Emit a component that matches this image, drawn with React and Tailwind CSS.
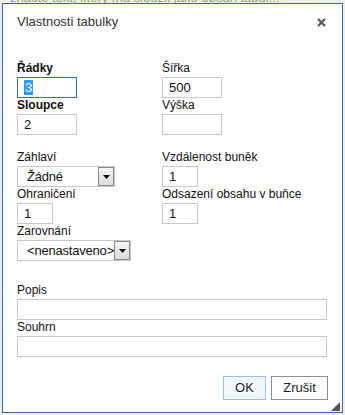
import React from "react";

const font = { fontFamily: '"Liberation Sans", Arial, sans-serif' };

function Label({ children, bold }) {
  return (
    <div
      className={
        "text-[12px] leading-[14px] mb-[2px] text-[#111] whitespace-nowrap " +
        (bold ? "font-bold" : "")
      }
    >
      {children}
    </div>
  );
}

function TextBox({ value, width, focused }) {
  return (
    <div
      className={
        "h-[21px] border bg-white flex items-center pl-[6px] text-[13px] text-[#111] " +
        (focused ? "border-[#3a6cc4]" : "border-[#c6c9cc]")
      }
      style={{ width }}
    >
      {focused ? (
        <span className="bg-[#3399ff] text-white leading-[15px] px-px">{value}</span>
      ) : (
        value
      )}
    </div>
  );
}

function Select({ value, width }) {
  return (
    <div
      className="h-[21px] border border-[#c6c9cc] bg-white flex items-center text-[13px] text-[#111]"
      style={{ width }}
    >
      <span className="flex-1 min-w-0 pl-[9px] whitespace-nowrap tracking-[-0.2px]">{value}</span>
      <div className="shrink-0 w-[16px] h-[19px] border border-[#8a8a8a] bg-gradient-to-b from-[#f4f4f4] to-[#dcdcdc] flex items-center justify-center">
        <svg width="7" height="4" viewBox="0 0 7 4">
          <path d="M0 0h7L3.5 4z" fill="#111" />
        </svg>
      </div>
    </div>
  );
}

export default function App() {
  return (
    <div className="w-[345px] h-[415px] bg-[#efefef] overflow-hidden" style={font}>
      <div className="h-[3px] overflow-hidden">
        <div className="text-[13px] leading-[13px] text-[#999] whitespace-nowrap pl-[10px] -mt-[9px]">
          značte text, který má sloužit jako obsah tabul...
        </div>
      </div>
      <div className="ml-[2px] w-[341px] h-[410px] border border-[#3d63a8] bg-white flex flex-col pl-[14px] pr-[14px]">
        <div className="flex items-center justify-between pt-[9px] h-[27px]">
          <span className="text-[13px] leading-[18px] text-[#333]">Vlastnosti tabulky</span>
          <svg width="9" height="9" viewBox="0 0 9 9" className="mr-[2px]">
            <path d="M1 1l7 7M8 1L1 8" stroke="#555" strokeWidth="2.2" />
          </svg>
        </div>

        <div className="grid grid-cols-[145px_1fr] mt-[30px]">
          <div>
            <Label bold>Řádky</Label>
            <TextBox value="3" width={60} focused />
            <Label bold>Sloupce</Label>
            <TextBox value="2" width={60} />
          </div>
          <div>
            <Label>Šířka</Label>
            <TextBox value="500" width={60} />
            <Label>Výška</Label>
            <TextBox value="" width={60} />
          </div>
        </div>

        <div className="grid grid-cols-[145px_1fr] mt-[15px]">
          <div>
            <Label>Záhlaví</Label>
            <Select value="Žádné" width={98} />
            <Label>Ohraničení</Label>
            <TextBox value="1" width={36} />
            <Label>Zarovnání</Label>
            <Select value="<nenastaveno>" width={114} />
          </div>
          <div>
            <Label>Vzdálenost buněk</Label>
            <TextBox value="1" width={36} />
            <Label>Odsazení obsahu v buňce</Label>
            <TextBox value="1" width={36} />
          </div>
        </div>

        <div className="mt-[22px]">
          <Label>Popis</Label>
          <TextBox value="" width={310} />
          <Label>Souhrn</Label>
          <TextBox value="" width={310} />
        </div>

        <div className="flex justify-end gap-[5px] mt-[19px]">
          <button className="w-[43px] h-[24px] border border-[#9dbdeb] bg-[#f2f6fd] text-[13px] text-[#222]">
            OK
          </button>
          <button className="w-[57px] h-[24px] border border-[#8f8f8f] bg-white text-[13px] text-[#222]">
            Zrušit
          </button>
        </div>

        <div className="flex-1 flex items-end justify-end -mr-[12px] pb-[1px]">
          <svg width="9" height="9" viewBox="0 0 9 9">
            <path d="M9 0V9H0z" fill="#555" />
          </svg>
        </div>
      </div>
    </div>
  );
}
